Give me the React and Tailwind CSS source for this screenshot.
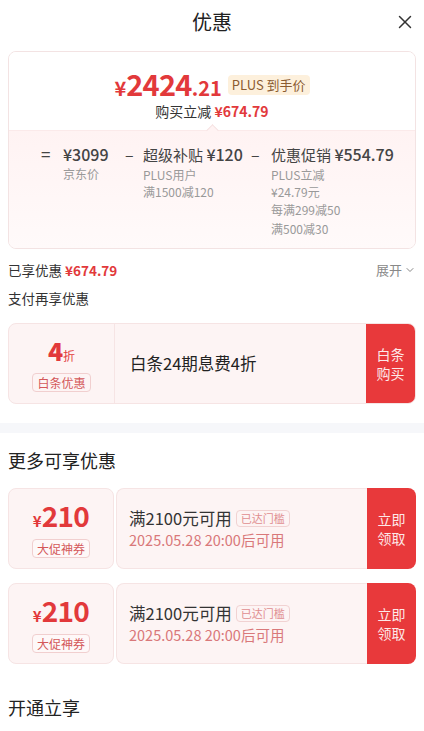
import { X, ChevronDown } from 'lucide-react';

const font = { fontFamily: '"Noto Sans CJK SC", "Noto Sans", sans-serif' };

const Coupon = () => (
  <div className="flex h-[81px] mx-2">
    <div className="relative w-[106px] bg-[#fdf4f4] border border-[#f6e4e4] rounded-lg flex flex-col items-center justify-center">
      <div className="flex items-baseline text-[#e2393b] font-bold leading-[30px]">
        <span className="text-[15px]">¥</span>
        <span className="text-[28px] tracking-tight">210</span>
      </div>
      <span className="mt-[3px] px-1 text-[12px] leading-[17px] text-[#d4585a] border border-[#f1cfcf] rounded-sm bg-white/40">大促神券</span>
    </div>
    <div className="flex-1 ml-[2px] bg-[#fdf4f4] border border-[#f6e4e4] border-r-0 rounded-l-lg flex flex-col justify-center pl-3">
      <div className="flex items-center">
        <span className="text-[16.5px] text-[#333] leading-[22px]">满2100元可用</span>
        <span className="ml-1 px-1 text-[11px] leading-[15px] text-[#e08e90] border border-[#f1d2d2] rounded-sm">已达门槛</span>
      </div>
      <span className="text-[14.5px] text-[#d9787a] leading-[20px] mt-[1px]">2025.05.28 20:00后可用</span>
    </div>
    <div className="w-[49px] bg-[#e8393b] rounded-r-lg flex flex-col items-center justify-center text-[14px] leading-[19px] text-[#fde8e8]">
      <span>立即</span>
      <span>领取</span>
    </div>
  </div>
);

const App = () => {
  return (
    <div className="w-[424px] h-[731px] bg-white overflow-hidden" style={font}>
      {/* 标题 */}
      <div className="relative h-[44px] flex items-center justify-center">
        <span className="text-[20px] text-[#222]">优惠</span>
        <X className="absolute right-[8px] top-[11px] text-[#333]" size={22} strokeWidth={1.6} />
      </div>

      {/* 价格卡片 */}
      <div className="mx-2 mt-[7px] border border-[#f3e3e3] rounded-lg overflow-hidden">
        <div className="h-[78px] bg-white flex flex-col items-center pt-[17px]">
          <div className="flex items-center h-[32px]">
            <div className="flex items-baseline text-[#e2393b] font-bold leading-[32px]">
              <span className="text-[20px]">¥</span>
              <span className="text-[29px] tracking-tight">2424</span>
              <span className="text-[20px]">.21</span>
            </div>
            <span className="ml-[6px] px-1 text-[13px] leading-[20px] text-[#8b5b30] bg-[#fdf0dc] rounded-sm">PLUS 到手价</span>
          </div>
          <div className="text-[14px] leading-[20px] text-[#333]">
            购买立减 <span className="text-[#e2393b] font-bold">¥674.79</span>
          </div>
        </div>
        <div className="relative h-[118px] bg-gradient-to-b from-[#fff3f3] to-[#fffafa] border-t border-[#fbeaea]">
          <div className="absolute left-[199px] -top-[5px] w-[9px] h-[9px] rotate-45 bg-[#fff3f3] border-l border-t border-[#f5e2e2]"></div>
          <div className="flex pt-[12px] pl-[32px] text-[#444]">
            <span className="text-[17px] leading-[22px] w-[22px]">=</span>
            <div className="flex flex-col w-[62px]">
              <span className="text-[16px] leading-[22px] font-medium">¥3099</span>
              <span className="text-[12px] leading-[17px] text-[#999]">京东价</span>
            </div>
            <span className="text-[16px] leading-[22px] w-[18px]">–</span>
            <div className="flex flex-col w-[108px]">
              <span className="text-[15px] leading-[22px]">超级补贴 <span className="text-[16px] font-medium">¥120</span></span>
              <span className="text-[12px] leading-[17px] text-[#999]">PLUS用户</span>
              <span className="text-[12px] leading-[17px] text-[#999]">满1500减120</span>
            </div>
            <span className="text-[16px] leading-[22px] w-[20px]">–</span>
            <div className="flex flex-col">
              <span className="text-[15px] leading-[22px]">优惠促销 <span className="text-[16px] font-medium">¥554.79</span></span>
              <span className="text-[12px] leading-[17px] text-[#999]">PLUS立减</span>
              <span className="text-[12px] leading-[17px] text-[#999]">¥24.79元</span>
              <span className="text-[12px] leading-[19px] text-[#999]">每满299减50</span>
              <span className="text-[12px] leading-[19px] text-[#999]">满500减30</span>
            </div>
          </div>
        </div>
      </div>

      {/* 已享优惠 */}
      <div className="flex items-center justify-between px-2 mt-[11px] h-[20px]">
        <span className="text-[13.5px] text-[#333]">已享优惠 <span className="text-[#e2393b] font-bold">¥674.79</span></span>
        <span className="flex items-center text-[13px] text-[#888]">展开<ChevronDown size={12} className="ml-[2px]" /></span>
      </div>
      <div className="px-2 mt-[8px] h-[20px] text-[13.5px] text-[#333]">支付再享优惠</div>

      {/* 白条 */}
      <div className="flex h-[81px] mx-2 mt-[15px] bg-[#fdf4f4] border border-[#f6e4e4] rounded-lg overflow-hidden">
        <div className="w-[106px] border-r border-[#f6e4e4] flex flex-col items-center justify-center">
          <div className="flex items-baseline text-[#e2393b] leading-[28px]">
            <span className="text-[25px] font-black">4</span>
            <span className="text-[12px]">折</span>
          </div>
          <span className="mt-[3px] px-1 text-[12px] leading-[17px] text-[#d4585a] border border-[#f1cfcf] rounded-sm">白条优惠</span>
        </div>
        <div className="flex-1 flex items-center pl-[15px] text-[16.5px] text-[#222]">白条24期息费4折</div>
        <div className="w-[49px] bg-[#e8393b] flex flex-col items-center justify-center text-[14px] leading-[19px] text-[#fde8e8]">
          <span>白条</span>
          <span>购买</span>
        </div>
      </div>

      <div className="mt-[19px] h-[10px] bg-[#f6f7fa]"></div>

      {/* 更多可享优惠 */}
      <div className="px-2 mt-[15px] h-[24px] text-[18px] leading-[24px] text-[#222]">更多可享优惠</div>
      <div className="mt-[16px] flex flex-col gap-[14px]">
        <Coupon />
        <Coupon />
      </div>

      <div className="px-2 mt-[31px] text-[18px] leading-[24px] text-[#222]">开通立享</div>
    </div>
  );
};

export default App;
